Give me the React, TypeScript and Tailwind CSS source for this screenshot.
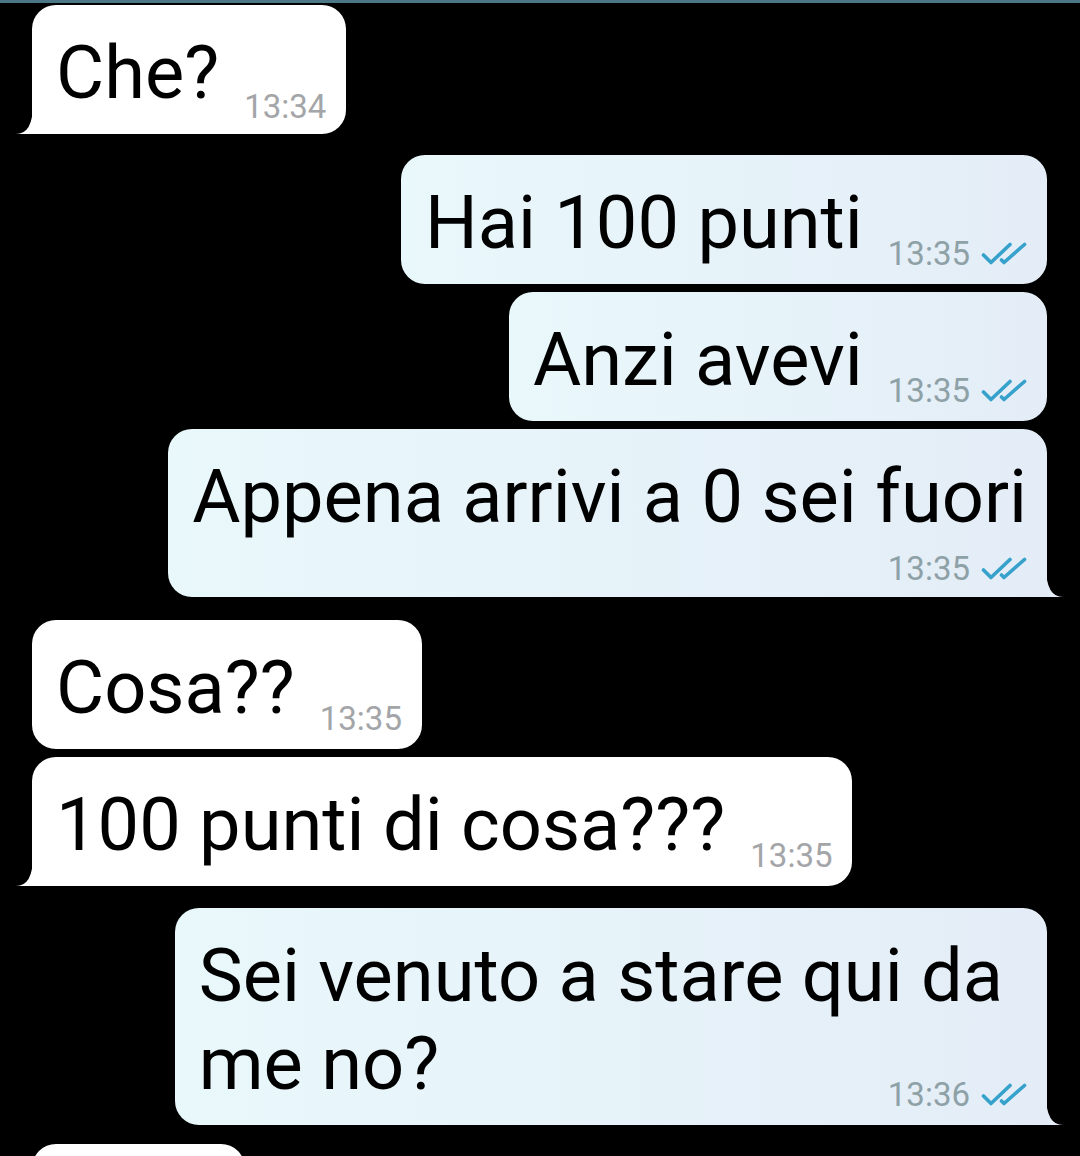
import React from "react";

const Check = () => (
  <svg width="46" height="24" viewBox="0 0 46 24" fill="none" stroke="#36a1cb" strokeWidth="3.6" strokeLinecap="round" strokeLinejoin="round">
    <path d="M2.5 13 L10 20.5 L29 2.5" />
    <path d="M20.5 18 L23 20.5 L43.5 2.5" />
  </svg>
);

const TailIn = () => (
  <svg className="absolute left-[-16px] bottom-0" width="18" height="30" viewBox="0 0 18 30">
    <path d="M17 0 Q17 30 0 30 L18 30 L18 0 Z" fill="#ffffff" />
  </svg>
);

const TailOut = () => (
  <svg className="absolute right-[-16px] bottom-0" width="18" height="30" viewBox="0 0 18 30">
    <path d="M1 0 Q1 30 18 30 L0 30 L0 0 Z" fill="#e4edf7" />
  </svg>
);

type Side = "in" | "out";

const Time = ({ t, side, className = "" }: { t: string; side: Side; className?: string }) => (
  <div className={`flex items-center gap-[11px] ${className}`}>
    <span className={`text-[33px] leading-[32px] ${side === "in" ? "text-[#a3a5a8]" : "text-[#8ea1a7]"}`}>{t}</span>
    {side === "out" && <Check />}
  </div>
);

const Bubble = ({ side, tail, children, className = "" }: { side: Side; tail?: boolean; children: React.ReactNode; className?: string }) => {
  const base =
    side === "in"
      ? "bg-white"
      : "bg-gradient-to-r from-[#e9f8fb] to-[#e4edf7]";
  const corner = tail ? (side === "in" ? "rounded-bl-none" : "rounded-br-none") : "";
  return (
    <div className={`flex ${side === "in" ? "justify-start" : "justify-end"}`}>
      <div className={`relative rounded-[24px] ${corner} ${base} pl-[24px] pr-[20px] pt-[24px] ${className}`}>
        {children}
        {tail && (side === "in" ? <TailIn /> : <TailOut />)}
      </div>
    </div>
  );
};

const Inline = ({ text, t, side, mb }: { text: string; t: string; side: Side; mb: string }) => (
  <div className="flex items-end">
    <span className="text-[74px] leading-[88px] text-black whitespace-nowrap">{text}</span>
    <Time t={t} side={side} className={`ml-[25px] ${mb}`} />
  </div>
);

export default function App() {
  return (
    <div
      className="w-[1080px] h-[1156px] overflow-hidden bg-black"
      style={{ fontFamily: "Roboto, 'Noto Sans', sans-serif" }}
    >
      <div className="h-[3px] bg-[#4d7686]" />
      <div className="flex flex-col pl-[32px] pr-[33px]">
        <div className="mt-[2px]">
          <Bubble side="in" tail className="pb-[17px]">
            <Inline text="Che?" t="13:34" side="in" mb="mb-[-6px]" />
          </Bubble>
        </div>
        <div className="mt-[21px]">
          <Bubble side="out" className="pb-[17px]">
            <Inline text="Hai 100 punti" t="13:35" side="out" mb="mb-[-3px]" />
          </Bubble>
        </div>
        <div className="mt-[8px]">
          <Bubble side="out" className="pb-[17px]">
            <Inline text="Anzi avevi" t="13:35" side="out" mb="mb-[-3px]" />
          </Bubble>
        </div>
        <div className="mt-[8px]">
          <Bubble side="out" tail className="pb-[12px]">
            <div className="text-[74px] leading-[88px] text-black whitespace-nowrap">Appena arrivi a 0 sei fuori</div>
            <div className="flex justify-end mt-[12px]">
              <Time t="13:35" side="out" />
            </div>
          </Bubble>
        </div>
        <div className="mt-[23px]">
          <Bubble side="in" className="pb-[17px]">
            <Inline text="Cosa??" t="13:35" side="in" mb="mb-[-3px]" />
          </Bubble>
        </div>
        <div className="mt-[8px]">
          <Bubble side="in" tail className="pb-[17px]">
            <Inline text="100 punti di cosa???" t="13:35" side="in" mb="mb-[-3px]" />
          </Bubble>
        </div>
        <div className="mt-[22px]">
          <Bubble side="out" tail className="pb-[17px]">
            <div className="text-[74px] leading-[88px] text-black whitespace-nowrap pr-[24px]">Sei venuto a stare qui da</div>
            <div className="flex items-end justify-between">
              <span className="text-[74px] leading-[88px] text-black whitespace-nowrap">me no?</span>
              <Time t="13:36" side="out" className="mb-[-3px]" />
            </div>
          </Bubble>
        </div>
        <div className="mt-[19px]">
          <div className="flex justify-start">
            <div className="w-[213px] h-[129px] rounded-[24px] bg-white" />
          </div>
        </div>
      </div>
    </div>
  );
}
